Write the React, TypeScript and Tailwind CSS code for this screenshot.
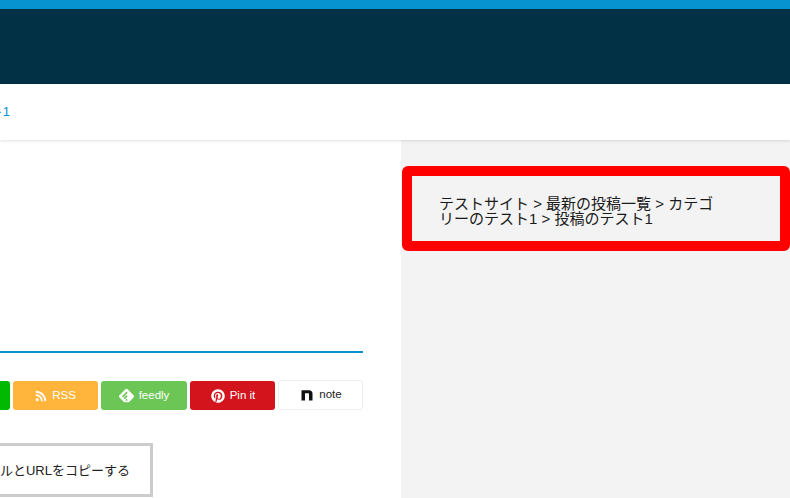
import * as React from 'react';
import { FaRss, FaPinterest } from 'react-icons/fa';
import { SiFeedly } from 'react-icons/si';

const App: React.FC = () => {
    return (
        <div className="h-[498px] w-[790px] overflow-hidden flex flex-col bg-white font-['Liberation_Sans','Noto_Sans_CJK_JP',sans-serif] text-[#222]">
            <div className="h-[9px] bg-[#0693cf]" />
            <div className="h-[75px] bg-[#023146]" />
            <div className="h-[56px] relative z-10 bg-white shadow-[0_1px_3px_rgba(0,0,0,0.12)] overflow-hidden">
                <div className="h-full w-[10px] flex items-center justify-end text-[13px] whitespace-nowrap">
                    <a href="#" className="text-[#0693cf]">カテゴリーのテスト1</a>
                </div>
            </div>
            <div className="flex flex-1 min-h-0">
                <main className="w-[401px] shrink-0 flex flex-col items-end pr-[38px] pt-[211px] overflow-hidden">
                    <div className="w-full h-[2px] shrink-0 bg-[#0693cf]" />
                    <div className="flex justify-end gap-[3px] mt-[28px] text-[11.5px] text-white">
                        <a className="w-[85px] h-[29px] rounded-[3px] bg-[#00b900] flex items-center justify-center gap-1">LINE</a>
                        <a className="w-[85px] h-[29px] rounded-[3px] bg-[#ffb53c] flex items-center justify-center gap-[5px]"><FaRss className="w-[12px] h-[12px]" />RSS</a>
                        <a className="w-[86px] h-[29px] rounded-[3px] bg-[#6cc655] flex items-center justify-center gap-[5px]"><SiFeedly className="w-[15px] h-[15px]" />feedly</a>
                        <a className="w-[85px] h-[29px] pl-[1px] rounded-[3px] bg-[#d3141d] flex items-center justify-center gap-[5px]"><FaPinterest className="w-[14px] h-[14px]" />Pin it</a>
                        <a className="w-[85px] h-[30px] -mt-px pl-[2px] rounded-[3px] bg-white border border-[#eeeeee] text-[#222] flex items-center justify-center gap-[6px]">
                            <svg className="w-[12px] h-[12px]" viewBox="0 0 12 12" fill="#111"><path d="M0.5 11.5V1.2H8.2C10.2 1.2 11.5 2.5 11.5 4.4V11.5H8V5.2C8 4.6 7.6 4.2 7 4.2H4V11.5Z" /></svg>
                            note
                        </a>
                    </div>
                    <button className="mt-[33px] mr-[210px] h-[54px] shrink-0 border-[3px] border-[#cccccc] bg-white pl-5 pr-5 pt-[2px] text-[13px] whitespace-nowrap">
                        タイトルとURLをコピーする
                    </button>
                </main>
                <aside className="flex-1 bg-[#f3f3f3] pl-px pt-[26px]">
                    <div className="h-[85px] rounded-[6px] border-[10px] border-[#ff0000] pl-[27px] pr-[64px] pt-[20px] text-[15px] leading-[15px] text-[#1a1a1a]">
                        テストサイト &gt; 最新の投稿一覧 &gt; カテゴリーのテスト1 &gt; 投稿のテスト1
                    </div>
                </aside>
            </div>
        </div>
    );
};

export default App;
